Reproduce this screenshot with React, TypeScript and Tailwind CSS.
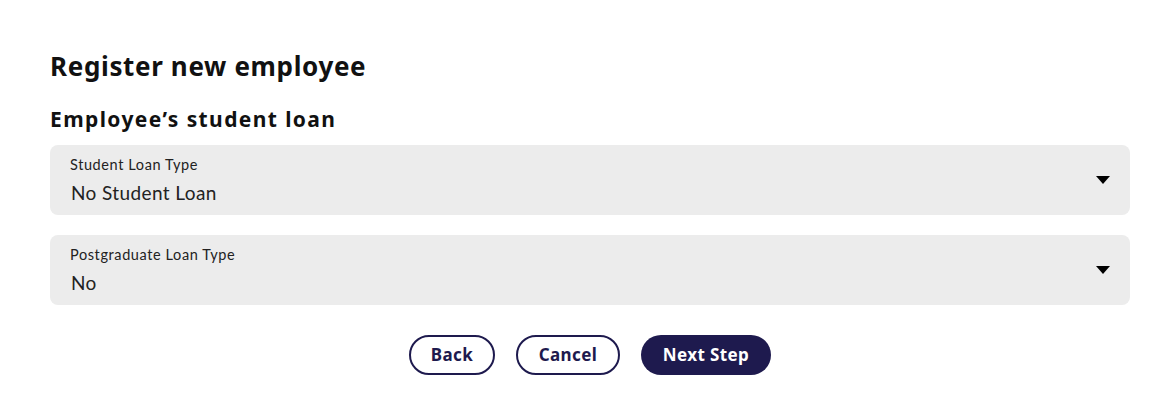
const heading = { fontFamily: "'Noto Sans', 'Open Sans', sans-serif" }

const Caret = () => (
  <svg width="14" height="8" viewBox="0 0 14 8" className="shrink-0">
    <path d="M0 0h14L7 8z" fill="#000" />
  </svg>
)

const SelectField = ({ label, value }: { label: string; value: string }) => (
  <div className="flex h-[70px] items-center justify-between rounded-lg bg-[#ececec] pl-5 pr-[20px]">
    <div className="flex flex-col" style={{ fontFamily: "Lato, sans-serif" }}>
      <span className="text-[14.5px] leading-[18px] tracking-[0.6px] text-[#222]">{label}</span>
      <span className="mt-[8px] pl-[1px] text-[19px] leading-[22px] tracking-[0.4px] text-[#222]">{value}</span>
    </div>
    <Caret />
  </div>
)

export default function App() {
  return (
    <div className="min-h-[412px] bg-white pl-[50px] pr-[46px] pt-[46px]">
      <h1 className="text-[26px] font-bold leading-[40px] tracking-[0.65px] text-[#111]" style={heading}>
        Register new employee
      </h1>
      <h2 className="mt-[19px] text-[21px] font-bold leading-[28px] tracking-[1.4px] text-[#111]" style={heading}>
        Employee’s student loan
      </h2>
      <div className="mt-[12px] flex flex-col gap-[20px]">
        <SelectField label="Student Loan Type" value="No Student Loan" />
        <SelectField label="Postgraduate Loan Type" value="No" />
      </div>
      <div className="mt-[30px] flex justify-center gap-[21px]" style={heading}>
        <button className="h-[40px] w-[86px] rounded-full border-2 border-[#1e1a4e] text-[17px] font-bold tracking-[0.4px] text-[#1e1a4e]">
          Back
        </button>
        <button className="h-[40px] w-[104px] rounded-full border-2 border-[#1e1a4e] text-[17px] font-bold tracking-[0.4px] text-[#1e1a4e]">
          Cancel
        </button>
        <button className="h-[40px] w-[130px] rounded-full bg-[#1e1a4e] text-[17px] font-bold tracking-[0.4px] text-white">
          Next Step
        </button>
      </div>
    </div>
  )
}
